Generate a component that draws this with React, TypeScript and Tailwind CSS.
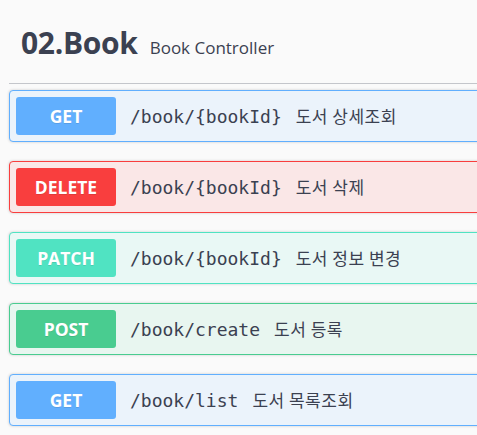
const ops = [
  {
    method: 'GET',
    path: '/book/{bookId}',
    desc: '도서 상세조회',
    box: 'border-[#61affe] bg-[#ebf3fb]',
    badge: 'bg-[#61affe]',
  },
  {
    method: 'DELETE',
    path: '/book/{bookId}',
    desc: '도서 삭제',
    box: 'border-[#f93e3e] bg-[#fae7e7]',
    badge: 'bg-[#f93e3e]',
  },
  {
    method: 'PATCH',
    path: '/book/{bookId}',
    desc: '도서 정보 변경',
    box: 'border-[#50e3c2] bg-[#e9f8f5]',
    badge: 'bg-[#50e3c2]',
  },
  {
    method: 'POST',
    path: '/book/create',
    desc: '도서 등록',
    box: 'border-[#49cc90] bg-[#e8f6f0]',
    badge: 'bg-[#49cc90]',
  },
  {
    method: 'GET',
    path: '/book/list',
    desc: '도서 목록조회',
    box: 'border-[#61affe] bg-[#ebf3fb]',
    badge: 'bg-[#61affe]',
  },
]

export default function App() {
  return (
    <div className="h-[435px] w-[477px] overflow-hidden bg-[#fafafa] text-[#3b4151] [font-family:'Open_Sans','Noto_Sans_CJK_KR',sans-serif]">
      <div className="w-[700px] pl-[9px]">
        <div className="flex items-baseline border-b border-[#c4c6cb] pb-[18px] pl-[12px] pt-[20px]">
          <h3 className="text-[30px] font-bold leading-[45px] tracking-[-0.3px]">02.Book</h3>
          <span className="ml-[12px] text-[17px]">Book Controller</span>
        </div>
        <div className="mt-[6px] flex flex-col gap-[19px]">
          {ops.map((op, i) => (
            <div
              key={i}
              className={`flex items-center rounded-[4px] border p-[6px] shadow-[0_0_3px_rgba(0,0,0,0.19)] ${op.box}`}
            >
              <span
                className={`flex h-[38px] w-[100px] shrink-0 items-center justify-center rounded-[3px] text-[17.5px] font-bold text-white [text-shadow:0_1px_0_rgba(0,0,0,0.1)] ${op.badge}`}
              >
                {op.method}
              </span>
              <span className="ml-[14px] text-[18px] [font-family:'DejaVu_Sans_Mono',monospace]">
                {op.path}
              </span>
              <span className="ml-[14px] text-[17px] tracking-[0.5px] [font-family:'Noto_Sans_CJK_KR',sans-serif]">
                {op.desc}
              </span>
            </div>
          ))}
        </div>
      </div>
    </div>
  )
}
